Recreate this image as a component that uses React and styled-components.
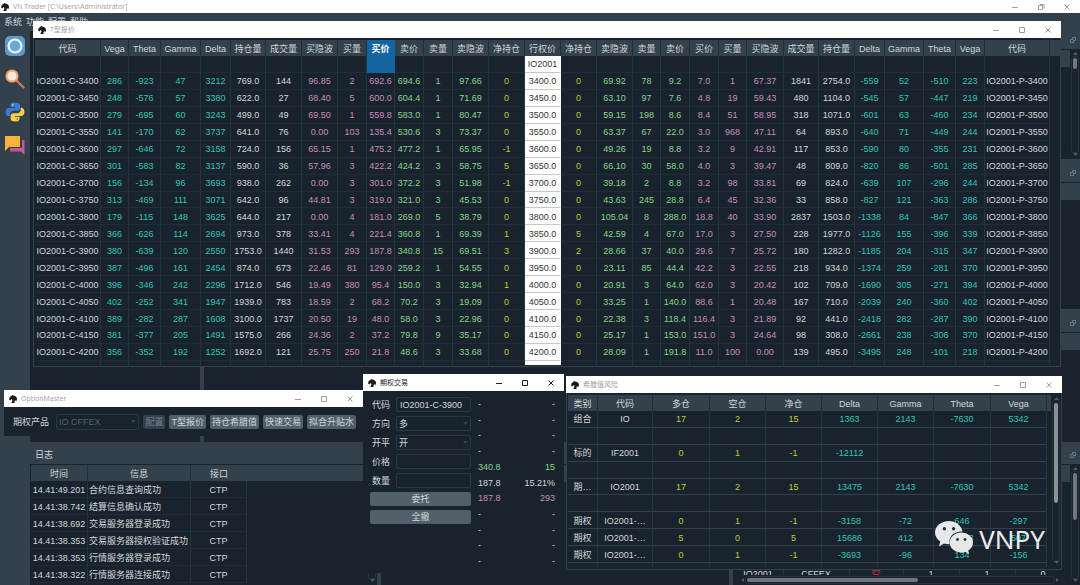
import React from "react";
import styled, { createGlobalStyle, css } from "styled-components";

const color = {
  bg: "#19232d",
  slate: "#32414b",
  line: "#26343f",
  lineStrong: "#32414b",
  text: "#d3d7da",
  teal: "#30c5b6",
  pink: "#c78ebb",
  green: "#85d68b",
  yellow: "#c3ca33",
  red: "#c8283c",
  button: "#505f69",
  accent: "#1464a0",
};

const GlobalStyle = createGlobalStyle`
  * { box-sizing: border-box; }
  html, body { margin: 0; background: ${color.bg}; }
  body, button, input, select, table {
    font-family: "Liberation Sans", "Noto Sans CJK SC", sans-serif;
    font-size: 9px;
    line-height: 12px;
    color: ${color.text};
  }
`;

/* ---------- main window ---------- */

const Desktop = styled.div`
  position: relative;
  display: flex;
  flex-direction: column;
  min-height: 100vh;
  overflow: hidden;
  background: ${color.bg};
`;

const TitleBarRoot = styled.header`
  display: flex;
  flex: none;
  align-items: center;
  height: ${(p) => (p.$main ? 13 : 17)}px;
  padding-left: ${(p) => (p.$main ? 1 : 5)}px;
  background: #fff;
  color: ${(p) => (p.$active ? "#222" : "#a0a0a0")};
`;

const TitleText = styled.span`
  flex: 1;
  margin-left: 4px;
  font-family: "Open Sans", "Noto Sans CJK SC", sans-serif;
  font-size: 7px;
  line-height: 12px;
  white-space: nowrap;
`;

const CaptionButton = styled.button`
  display: grid;
  place-items: center;
  width: 26px;
  height: 100%;
  padding: 0;
  border: 0;
  background: none;
  color: inherit;
`;

const MenuBar = styled.nav`
  display: flex;
  gap: 4px;
  height: 18px;
  padding: 2px 4px 0;
  background: ${color.slate};
`;

const MenuButton = styled.button`
  height: 14px;
  padding: 0;
  border: 0;
  background: none;
`;

const Main = styled.div`
  display: flex;
  flex: 1;
`;

const ToolBar = styled.aside`
  display: flex;
  flex-direction: column;
  flex: none;
  align-items: center;
  gap: 13px;
  width: 30px;
  padding-top: 5px;
  background: ${color.slate};
`;

const ToolButton = styled.button`
  width: 20px;
  height: 20px;
  padding: 0;
  border: 0;
  background: none;
  svg { display: block; }
`;

const DockArea = styled.div`
  display: flex;
  flex: 1;
  flex-direction: column;
  min-width: 0;
`;

const DockRow = styled.div`
  display: flex;
  flex: ${(p) => (p.$height ? `0 0 ${p.$height}px` : "1")};
  min-height: 0;
`;

const Splitter = styled.div`
  flex: none;
  ${(p) => (p.$vertical ? "width: 4px;" : "height: 4px;")}
  background: ${color.slate};
`;

const Dock = styled.section`
  display: flex;
  flex: ${(p) => (p.$width ? `0 0 ${p.$width}px` : p.$grow || 1)};
  flex-direction: column;
  min-width: 0;
  min-height: 0;
  border-bottom: ${(p) => (p.$lined ? `1px solid ${color.lineStrong}` : "0")};
`;

const DockHeader = styled.h2`
  display: flex;
  align-items: center;
  justify-content: space-between;
  height: 18px;
  flex: none;
  margin: 0 0 1px;
  padding: 0 4px 0 5px;
  background: ${color.slate};
  font-size: 9px;
  font-weight: 400;
`;

const DockBody = styled.div`
  display: flex;
  flex: 1;
  min-height: 0;
`;

const DockContent = styled.div`
  display: flex;
  flex: 1;
  flex-direction: column;
  min-width: 0;
  padding-left: 1px;
  overflow: hidden;
`;

const HeaderStrip = styled.div`
  flex: none;
  height: 17px;
  background: ${color.slate};
`;

const Spacer = styled.div`
  flex: 1;
`;

const ScrollTrack = styled.div`
  display: flex;
  flex: none;
  flex-direction: ${(p) => (p.$horizontal ? "row" : "column")};
  align-items: center;
  justify-content: space-between;
  ${(p) => (p.$horizontal ? "height: 10px;" : "width: 10px;")}
  padding: ${(p) => (p.$horizontal ? "0 10px 0 6px" : "2px 0")};
  color: #4c5a64;
`;

const ScrollGroove = styled.div`
  flex: 1;
  ${(p) => (p.$horizontal ? "height: 8px;" : "width: 8px;")}
  padding: 1px;
  border: 1px solid ${color.line};
  border-radius: 3px;
`;

const ScrollThumb = styled.div`
  ${(p) => (p.$horizontal ? `width: ${p.$size}; height: 100%;` : `height: ${p.$size};`)}
  ${(p) => !p.$horizontal && "width: 100%;"}
  border-radius: 2px;
  background: ${(p) => (p.$bright ? "#8b9194" : "#6f787e")};
`;

const CutRow = styled.div`
  flex: none;
  height: 5px;
  overflow: hidden;
`;

/* ---------- tables ---------- */

const DataTable = styled.table`
  width: 100%;
  ${(p) => p.$height && `height: ${p.$height}px;`}
  table-layout: fixed;
  border-collapse: separate;
  border-spacing: 0;
`;

const toneStyle = {
  strike: css`
    background: #fff;
    color: #333;
    border-right-color: #fff;
    border-bottom-color: #c4c8cb;
  `,
  accent: css`
    background: ${color.accent};
    border-color: ${color.accent};
  `,
};

const cellBase = css`
  padding: 1px 0 0;
  overflow: hidden;
  font-weight: 400;
  line-height: 12px;
  white-space: nowrap;
  text-align: center;
  border-right: 1px solid ${color.line};
`;

const Th = styled.th`
  ${cellBase}
  height: 16px;
  background: ${color.slate};
  border-right-color: #222e38;
  ${(p) => p.$tone === "accent" && css`
    background: ${color.accent};
    border-color: ${color.accent};
    color: #fff;
    font-weight: 700;
  `}
  ${(p) => p.$plain && "border-right: 0;"}
`;

const Td = styled.td`
  ${cellBase}
  height: ${(p) => (p.$roomy ? 17 : 16)}px;
  border-bottom: 1px solid ${(p) => (p.$strong ? color.lineStrong : "#202c37")};
  color: ${(p) => color[p.$tone] || color.text};
  text-align: ${(p) => (p.$left ? "left" : "center")};
  padding-left: ${(p) => (p.$left ? 1 : 0)}px;
  ${(p) => toneStyle[p.$tone]}
  ${(p) => p.$plain && "border: 0;"}
  ${(p) => p.$tight && "height: 8px; padding-top: 0; line-height: 8px;"}
`;

/* ---------- floating windows ---------- */

const FloatingWindow = styled.section`
  position: absolute;
  display: flex;
  flex-direction: column;
  background: ${color.bg};
`;

const ChainWindow = styled(FloatingWindow)`
  top: 21px;
  left: 33px;
  right: 19px;
`;

const MasterWindow = styled(FloatingWindow)`
  top: 390px;
  left: 4px;
  width: 359px;
`;

const TradeWindow = styled(FloatingWindow)`
  top: 374px;
  left: 363px;
  width: 201px;
`;

const GreeksWindow = styled(FloatingWindow)`
  top: 376px;
  left: 566px;
  right: 18px;
`;

const TableFrame = styled.div`
  display: flex;
  height: ${(p) => p.$height}px;
  padding: 2px 0 ${(p) => p.$bottom || 0}px 1px;
  border: 1px solid ${color.lineStrong};
  border-top: 0;
`;

const TableClip = styled.div`
  flex: 1;
  min-width: 0;
  overflow: hidden;
`;

const MasterBar = styled.div`
  display: flex;
  align-items: center;
  gap: 4px;
  height: 29px;
  padding: 0 7px 0 9px;
`;

const MasterLabel = styled.label`
  margin-right: 3px;
  white-space: nowrap;
`;

const SelectBox = styled.div`
  position: relative;
  flex: 1;
  min-width: 0;
  color: #35434e;
  svg {
    position: absolute;
    top: 50%;
    right: 3px;
    margin-top: -2px;
    pointer-events: none;
  }
`;

const fieldStyle = css`
  display: block;
  width: 100%;
  height: 15px;
  padding: 0 3px;
  border: 1px solid #2a3843;
  border-radius: 2px;
  outline: 0;
  background: ${color.bg};
`;

const Select = styled.select`
  ${fieldStyle}
  height: ${(p) => (p.$tall ? 16 : 15)}px;
  padding: 0 2px;
  appearance: none;
  opacity: 1;
  color: ${(p) => (p.disabled ? "#55626c" : color.text)};
`;

const Input = styled.input`
  ${fieldStyle}
`;

const PushButton = styled.button`
  height: 14px;
  padding: 0 ${(p) => (p.$block ? 0 : 2)}px;
  ${(p) => p.$block && "width: 100%;"}
  border: 0;
  border-radius: 2px;
  background: ${(p) => (p.disabled ? "#32414b" : color.button)};
  color: ${(p) => (p.disabled ? "#73808a" : color.text)};
  white-space: nowrap;
`;

const TradeBody = styled.div`
  display: flex;
  gap: 7px;
  height: 182px;
  padding: 5px 9px 4px 7px;
`;

const TradeForm = styled.form`
  flex: none;
  width: 101px;
  padding-top: 1px;
`;

const Field = styled.div`
  display: flex;
  align-items: center;
  margin-bottom: 4px;
  label { flex: none; width: 26px; padding-left: 2px; }
`;

const FieldControl = styled.div`
  flex: 1;
  min-width: 0;
`;

const FormButtons = styled.div`
  display: grid;
  gap: 4px;
`;

const QuoteLadder = styled.div`
  display: flex;
  flex: 1;
  flex-direction: column;
`;

const QuoteRow = styled.div`
  display: flex;
  flex: 1;
  align-items: center;
  justify-content: space-between;
  color: ${(p) => color[p.$tone] || color.text};
`;

const Watermark = styled.div`
  position: absolute;
  right: 35px;
  bottom: 28px;
  display: flex;
  align-items: flex-start;
  gap: 5px;
  color: #e9ecee;
  font-family: "Noto Sans", sans-serif;
  font-size: 26px;
  line-height: 36px;
`;

/* ---------- drawings ---------- */

const HorseLogo = () => (
  <svg width="8" height="8" viewBox="0 0 16 16" aria-hidden="true">
    <path
      fill="#1b1b1b"
      d="M1 5 4 2l3-2 1 1c4 0 8 3 8 7 0 2-1 4-3 5l1-3-3 2v4H5c0-3 2-4 2-6L5 8 3 11 0 9z"
    />
  </svg>
);

const MinGlyph = () => (
  <svg width="8" height="8" viewBox="0 0 8 8" stroke="currentColor" fill="none">
    <path d="M1 4.5h6" />
  </svg>
);
const MaxGlyph = () => (
  <svg width="8" height="8" viewBox="0 0 8 8" stroke="currentColor" fill="none">
    <path d="M1.5 1.5h5v5h-5z" />
  </svg>
);
const RestoreGlyph = () => (
  <svg width="8" height="8" viewBox="0 0 8 8" stroke="currentColor" fill="none">
    <path d="M1.5 2.5h4v4h-4zM3 1.5h4v4" />
  </svg>
);
const CloseGlyph = () => (
  <svg width="8" height="8" viewBox="0 0 8 8" stroke="currentColor" fill="none">
    <path d="m1.5 1.5 5 5m0-5-5 5" />
  </svg>
);
const FloatGlyph = () => (
  <svg width="6" height="6" viewBox="0 0 6 6" stroke="#6c7982" fill="none">
    <path d="M.5 2.5h3v3h-3zM2.5 2V.5h3v3H4" />
  </svg>
);
const Arrow = ({ d = "M0 0h5L2.5 3z" }) => (
  <svg width="5" height="4" viewBox="0 0 5 4" fill="currentColor" aria-hidden="true">
    <path d={d} />
  </svg>
);
const UP = "M0 3h5L2.5 0z";
const LEFT = "M4 0v4L1 2z";
const RIGHT = "M1 0v4l3-2z";

const ConnectIcon = () => (
  <svg width="20" height="20" viewBox="0 0 20 20">
    <rect width="20" height="20" rx="5" fill="#5b9bd1" />
    <circle cx="10" cy="10" r="6.5" fill="#68a8db" stroke="#f4f8fb" strokeWidth="2.2" />
  </svg>
);
const SearchIcon = () => (
  <svg width="20" height="20" viewBox="0 0 20 20">
    <path d="m11 11 7.500 7.500" stroke="#c9795b" strokeWidth="2.4" strokeLinecap="round" />
    <circle cx="7" cy="7" r="5.6" fill="#fbe9dc" stroke="#f2a468" strokeWidth="2" />
  </svg>
);
const PythonIcon = () => (
  <svg width="20" height="20" viewBox="0 0 20 20">
    <path
      fill="#3f78cf"
      d="M9.800 .5C6.200.5 5.500 1.800 5.500 3.300V5.200h4.700v.8H3.800C1.700 6 .6 7.700.6 10s1 4.300 3 4.300h1.500v-2.400c0-1.800 1.500-3.200 3.300-3.200h4.200c1.500 0 2.500-1.100 2.500-2.600V3.300C15.100 1.500 13.200.5 9.800.5z"
    />
    <circle cx="7.700" cy="3" r=".8" fill="#d9e6fa" />
    <path
      fill="#fbcf43"
      d="M10.200 19.500c3.600 0 4.300-1.300 4.300-2.800v-1.900H9.800V14h6.400c2.100 0 3.200-1.700 3.200-4s-1-4.300-3-4.300h-.7v2.400c0 1.800-1.500 3.200-3.300 3.200H8.200c-1.500 0-2.500 1.100-2.500 2.600v2.800c0 1.800 1.300 2.800 4.500 2.800z"
    />
    <circle cx="12.300" cy="17" r=".8" fill="#6b5a20" />
  </svg>
);
const ChatIcon = () => (
  <svg width="20" height="20" viewBox="0 0 20 20">
    <path fill="#c9578f" d="M17 5h2.500v15L16 16.500H5V13h12z" />
    <path fill="#f9b13d" d="M0 1h15v11H4l-4 4z" />
  </svg>
);
const WeChatIcon = () => (
  <svg width="39" height="33" viewBox="0 0 39 33" aria-hidden="true">
    <path
      fill="#e6e8ea"
      d="M14 0C6.300 0 0 5 0 11.500c0 3.700 2 6.800 5.300 9L4 25.500l5-3c1.500.5 3.200.7 5 .7h.8C13 15.500 19 10.200 27.500 10.500 26.300 4.500 20.800 0 14 0z"
    />
    <path
      fill="#e6e8ea"
      d="M38 21.600C38 16 32.700 11.600 26.300 11.600S14.700 16 14.700 21.600s5.200 10 11.600 10c1.400 0 2.700-.2 4-.6l3.900 2-1-3.300c2.900-1.800 4.800-4.700 4.800-8.100z"
    />
    <g fill="#26323c">
      <circle cx="9.400" cy="7.800" r="1.700" />
      <circle cx="18.600" cy="7.800" r="1.700" />
      <circle cx="22.500" cy="18.500" r="1.400" />
      <circle cx="30" cy="18.500" r="1.400" />
    </g>
  </svg>
);

/* ---------- data ---------- */

const chainColumns = [
  ["代码", 66, "text"], ["Vega", 28, "teal"], ["Theta", 32, "teal"], ["Gamma", 40, "teal"],
  ["Delta", 30, "teal"], ["持仓量", 35, "text"], ["成交量", 36, "text"], ["买隐波", 36, "pink"],
  ["买量", 29, "pink"], ["买价", 28, "pink"], ["卖价", 29, "green"], ["卖量", 29, "green"],
  ["卖隐波", 36, "green"], ["净持仓", 36, "yellow"], ["行权价", 36, "strike"], ["净持仓", 36, "yellow"],
  ["卖隐波", 36, "green"], ["卖量", 28, "green"], ["卖价", 29, "green"], ["买价", 29, "pink"],
  ["买量", 28, "pink"], ["买隐波", 37, "pink"], ["成交量", 35, "text"], ["持仓量", 36, "text"],
  ["Delta", 30, "teal"], ["Gamma", 39, "teal"], ["Theta", 32, "teal"], ["Vega", 29, "teal"],
  ["代码", 65, "text"],
];
const SELECTED_COLUMN = 9;
const STRIKE_COLUMN = 14;

const chainRows = `
286 -923 47 3212 769.0 144 96.85 2 692.6 694.6 1 97.66 0 3400 0 69.92 78 9.2 7.0 1 67.37 1841 2754.0 -559 52 -510 223
248 -576 57 3380 622.0 27 68.40 5 600.0 604.4 1 71.69 0 3450 0 63.10 97 7.6 4.8 19 59.43 480 1104.0 -545 57 -447 219
279 -695 60 3243 499.0 49 69.50 1 559.8 583.0 1 80.47 0 3500 0 59.15 198 8.6 8.4 51 58.95 318 1071.0 -601 63 -460 234
141 -170 62 3737 641.0 76 0.00 103 135.4 530.6 3 73.37 0 3550 0 63.37 67 22.0 3.0 968 47.11 64 893.0 -640 71 -449 244
297 -646 72 3158 724.0 156 65.15 1 475.2 477.2 1 65.95 -1 3600 0 49.26 19 8.8 3.2 9 42.91 117 853.0 -590 80 -355 231
301 -583 82 3137 590.0 36 57.96 3 422.2 424.2 3 58.75 5 3650 0 66.10 30 58.0 4.0 3 39.47 48 809.0 -820 86 -501 285
156 -134 96 3693 938.0 262 0.00 3 301.0 372.2 3 51.98 -1 3700 0 39.18 2 8.8 3.2 98 33.81 69 824.0 -639 107 -296 244
313 -469 111 3071 642.0 96 44.81 3 319.0 321.0 3 45.53 0 3750 0 43.63 245 28.8 6.4 45 32.36 33 858.0 -827 121 -363 286
179 -115 148 3625 644.0 217 0.00 4 181.0 269.0 5 38.79 0 3800 0 105.04 8 288.0 18.8 40 33.90 2837 1503.0 -1338 84 -847 366
366 -626 114 2694 973.0 378 33.41 4 221.4 360.8 1 69.39 1 3850 5 42.59 4 67.0 17.0 3 27.50 228 1977.0 -1126 155 -396 339
380 -639 120 2550 1753.0 1440 31.53 293 187.8 340.8 15 69.51 3 3900 2 28.66 37 40.0 29.6 7 25.72 180 1282.0 -1185 204 -315 347
387 -496 161 2454 874.0 673 22.46 81 129.0 259.2 1 54.55 0 3950 0 23.11 85 44.4 42.2 3 22.55 218 934.0 -1374 259 -281 370
396 -346 242 2296 1712.0 546 19.49 380 95.4 150.0 3 32.94 1 4000 0 20.91 3 64.0 62.0 3 20.42 102 709.0 -1690 305 -271 394
402 -252 341 1947 1939.0 783 18.59 2 68.2 70.2 3 19.09 0 4050 0 33.25 1 140.0 88.6 1 20.48 167 710.0 -2039 240 -360 402
389 -282 287 1608 3100.0 1737 20.50 19 48.0 58.0 3 22.96 0 4100 0 22.38 3 118.4 116.4 3 21.89 92 441.0 -2418 282 -287 390
381 -377 205 1491 1575.0 266 24.36 2 37.2 79.8 9 35.17 0 4150 0 25.17 1 153.0 151.0 3 24.64 98 308.0 -2661 238 -306 370
356 -352 192 1252 1692.0 121 25.75 250 21.8 48.6 3 33.68 0 4200 0 28.09 1 191.8 11.0 100 0.00 139 495.0 -3495 248 -101 218
`
  .trim()
  .split("\n")
  .map((line) => {
    const cells = line.split(" ");
    const strike = cells[13];
    cells[13] = `${strike}.0`;
    return [`IO2001-C-${strike}`, ...cells, `IO2001-P-${strike}`];
  });

const greekColumns = [
  ["类别", 30, "text"], ["代码", 55, "text"], ["多仓", 57, "yellow"], ["空仓", 56, "yellow"],
  ["净仓", 56, "yellow"], ["Delta", 56, "teal"], ["Gamma", 56, "teal"], ["Theta", 57, "teal"],
  ["Vega", 56, "teal"],
];
const greekRows = [
  ["组合", "IO", "17", "2", "15", "1363", "2143", "-7630", "5342"],
  [],
  ["标的", "IF2001", "0", "1", "-1", "-12112"],
  [],
  ["期…", "IO2001", "17", "2", "15", "13475", "2143", "-7630", "5342"],
  [],
  ["期权", "IO2001-…", "0", "1", "-1", "-3158", "-72", "646", "-297"],
  ["期权", "IO2001-…", "5", "0", "5", "15686", "412", "-1603", "507"],
  ["期权", "IO2001-…", "0", "1", "-1", "-3693", "-96", "134", "-156"],
  ["期权"],
];

const logRows = [
  ["14.41:49.201", "合约信息查询成功"],
  ["14.41:38.742", "结算信息确认成功"],
  ["14.41:38.692", "交易服务器登录成功"],
  ["14.41:38.353", "交易服务器授权验证成功"],
  ["14.41:38.353", "行情服务器登录成功"],
  ["14.41:38.322", "行情服务器连接成功"],
];

const quotes = [
  ["-", "-"], ["-", "-"], ["-", "-"], ["-", "-"],
  ["340.8", "15", "green"], ["187.8", "15.21%"], ["187.8", "293", "pink"],
  ["-", "-"], ["-", "-"], ["-", "-"], ["-", "-"],
];

/* ---------- parts ---------- */

function TitleBar({ title, main, active }) {
  return (
    <TitleBarRoot $main={main} $active={active}>
      <HorseLogo />
      <TitleText>{title}</TitleText>
      <CaptionButton aria-label="最小化"><MinGlyph /></CaptionButton>
      <CaptionButton aria-label="最大化">{main ? <RestoreGlyph /> : <MaxGlyph />}</CaptionButton>
      <CaptionButton aria-label="关闭"><CloseGlyph /></CaptionButton>
    </TitleBarRoot>
  );
}

function Scrollbar({ size, horizontal, bright }) {
  return (
    <ScrollTrack $horizontal={horizontal}>
      <Arrow d={horizontal ? LEFT : UP} />
      <ScrollGroove $horizontal={horizontal}>
        {size && <ScrollThumb $size={size} $horizontal={horizontal} $bright={bright} />}
      </ScrollGroove>
      <Arrow d={horizontal ? RIGHT : undefined} />
    </ScrollTrack>
  );
}

function ColGroup({ widths }) {
  return (
    <colgroup>
      {widths.map((w, i) => (
        <col key={i} width={w} />
      ))}
    </colgroup>
  );
}

function OptionChain() {
  return (
    <ChainWindow aria-label="T型报价">
      <TitleBar title="T型报价" />
      <TableFrame $height={329} $bottom={1}>
        <TableClip>
          <DataTable $height={338}>
            <ColGroup widths={[...chainColumns.map((c) => c[1]), 11]} />
            <thead>
              <tr>
                {chainColumns.map(([name], i) => (
                  <Th key={i} $tone={i === SELECTED_COLUMN ? "accent" : undefined}>{name}</Th>
                ))}
                <Th $plain />
              </tr>
            </thead>
            <tbody>
              <tr>
                {chainColumns.map(([, , tone], i) => (
                  <Td key={i} $tone={i === SELECTED_COLUMN ? "accent" : tone}>
                    {i === STRIKE_COLUMN ? "IO2001" : ""}
                  </Td>
                ))}
                <Td $plain />
              </tr>
              {chainRows.map((row) => (
                <tr key={row[0]}>
                  {row.map((value, i) => (
                    <Td key={i} $tone={chainColumns[i][2]}>{value}</Td>
                  ))}
                  <Td $plain />
                </tr>
              ))}
              <tr>
                {chainColumns.map(([, , tone], i) => (
                  <Td key={i} $tone={tone} />
                ))}
                <Td $plain />
              </tr>
            </tbody>
          </DataTable>
        </TableClip>
      </TableFrame>
    </ChainWindow>
  );
}

function OptionMaster() {
  return (
    <MasterWindow aria-label="OptionMaster">
      <TitleBar title="OptionMaster" />
      <MasterBar>
        <MasterLabel htmlFor="portfolio">期权产品</MasterLabel>
        <SelectBox>
          <Select id="portfolio" disabled $tall>
            <option>IO CFFEX</option>
          </Select>
          <Arrow />
        </SelectBox>
        <PushButton disabled>配置</PushButton>
        <PushButton>T型报价</PushButton>
        <PushButton>持仓希腊值</PushButton>
        <PushButton>快速交易</PushButton>
        <PushButton>拟合升贴水</PushButton>
      </MasterBar>
    </MasterWindow>
  );
}

function TradePanel() {
  return (
    <TradeWindow aria-label="期权交易">
      <TitleBar title="期权交易" active />
      <TradeBody>
        <TradeForm onSubmit={(e) => e.preventDefault()}>
          <Field>
            <label htmlFor="symbol">代码</label>
            <FieldControl><Input id="symbol" defaultValue="IO2001-C-3900" /></FieldControl>
          </Field>
          <Field>
            <label htmlFor="direction">方向</label>
            <SelectBox>
              <Select id="direction"><option>多</option></Select>
              <Arrow />
            </SelectBox>
          </Field>
          <Field>
            <label htmlFor="offset">开平</label>
            <SelectBox>
              <Select id="offset"><option>开</option></Select>
              <Arrow />
            </SelectBox>
          </Field>
          <Field>
            <label htmlFor="price">价格</label>
            <FieldControl><Input id="price" /></FieldControl>
          </Field>
          <Field>
            <label htmlFor="volume">数量</label>
            <FieldControl><Input id="volume" /></FieldControl>
          </Field>
          <FormButtons>
            <PushButton $block>委托</PushButton>
            <PushButton $block>全撤</PushButton>
          </FormButtons>
        </TradeForm>
        <QuoteLadder>
          {quotes.map(([price, volume, tone], i) => (
            <QuoteRow key={i} $tone={tone}>
              <span>{price}</span>
              <span>{volume}</span>
            </QuoteRow>
          ))}
        </QuoteLadder>
      </TradeBody>
    </TradeWindow>
  );
}

function GreeksPanel() {
  return (
    <GreeksWindow aria-label="希腊值风险">
      <TitleBar title="希腊值风险" />
      <TableFrame $height={177} $bottom={2}>
        <TableClip>
          <DataTable $height={185}>
            <ColGroup widths={[...greekColumns.map((c) => c[1]), 4]} />
            <thead>
              <tr>
                {greekColumns.map(([name], i) => (
                  <Th key={i}>{name}</Th>
                ))}
                <Th $plain />
              </tr>
            </thead>
            <tbody>
              {greekRows.map((row, r) => (
                <tr key={r}>
                  {greekColumns.map(([, , tone], i) => (
                    <Td key={i} $tone={tone} $strong>{row[i]}</Td>
                  ))}
                  <Td $plain />
                </tr>
              ))}
            </tbody>
          </DataTable>
        </TableClip>
        <Scrollbar size="64%" bright />
      </TableFrame>
    </GreeksWindow>
  );
}

function LogDock() {
  return (
    <Dock $width={347}>
      <DockHeader>日志</DockHeader>
      <DockBody>
        <DockContent>
          <DataTable>
            <ColGroup widths={[57, 103, 56, undefined]} />
            <thead>
              <tr><Th>时间</Th><Th>信息</Th><Th $plain>接口</Th><Th $plain /></tr>
            </thead>
            <tbody>
              {logRows.map(([time, message]) => (
                <tr key={time + message}>
                  <Td $roomy>{time}</Td>
                  <Td $roomy $left>{message}</Td>
                  <Td $roomy>CTP</Td>
                  <Td $roomy $plain />
                </tr>
              ))}
            </tbody>
          </DataTable>
        </DockContent>
        <Scrollbar />
      </DockBody>
    </Dock>
  );
}

function EmptyDock({ size, lined, grow }) {
  return (
    <Dock $lined={lined} $grow={grow}>
      <DockHeader><span /><FloatGlyph /></DockHeader>
      <DockBody>
        <DockContent><HeaderStrip /></DockContent>
        {size && <Scrollbar size={size} />}
      </DockBody>
    </Dock>
  );
}

function PositionDock() {
  return (
    <Dock>
      <DockHeader><span /><FloatGlyph /></DockHeader>
      <DockBody>
        <DockContent>
          <HeaderStrip />
          <Spacer />
          <CutRow>
            <DataTable>
              <ColGroup widths={[50, 66, 54, 56, 56, 56]} />
              <tbody>
                <tr>
                  <Td $tight>IO2001</Td>
                  <Td $tight>CFFEX</Td>
                  <Td $tight $tone="red">空</Td>
                  <Td $tight>1</Td>
                  <Td $tight>1</Td>
                  <Td $tight>0</Td>
                </tr>
              </tbody>
            </DataTable>
          </CutRow>
          <Scrollbar horizontal size="56%" />
        </DockContent>
        <Scrollbar size="45%" />
      </DockBody>
    </Dock>
  );
}

export default function App() {
  return (
    <>
      <GlobalStyle />
      <Desktop>
        <TitleBar main title="VN Trader [C:\Users\Administrator]" />
        <MenuBar>
          <MenuButton>系统</MenuButton>
          <MenuButton>功能</MenuButton>
          <MenuButton>配置</MenuButton>
          <MenuButton>帮助</MenuButton>
        </MenuBar>
        <Main>
          <ToolBar>
            <ToolButton aria-label="连接"><ConnectIcon /></ToolButton>
            <ToolButton aria-label="查询"><SearchIcon /></ToolButton>
            <ToolButton aria-label="脚本"><PythonIcon /></ToolButton>
            <ToolButton aria-label="论坛"><ChatIcon /></ToolButton>
          </ToolBar>
          <DockArea>
            <DockRow>
              <Dock $width={170} />
              <Splitter $vertical />
              <Dock>
                <EmptyDock grow={7} size="12%" lined />
                <Splitter />
                <EmptyDock grow={8} lined />
                <Splitter />
                <EmptyDock grow={7} />
              </Dock>
            </DockRow>
            <Splitter />
            <DockRow $height={139}>
              <LogDock />
              <Splitter $vertical />
              <EmptyDock />
              <Splitter $vertical />
              <PositionDock />
            </DockRow>
          </DockArea>
        </Main>
        <OptionChain />
        <OptionMaster />
        <TradePanel />
        <GreeksPanel />
        <Watermark><WeChatIcon />VNPY</Watermark>
      </Desktop>
    </>
  );
}
